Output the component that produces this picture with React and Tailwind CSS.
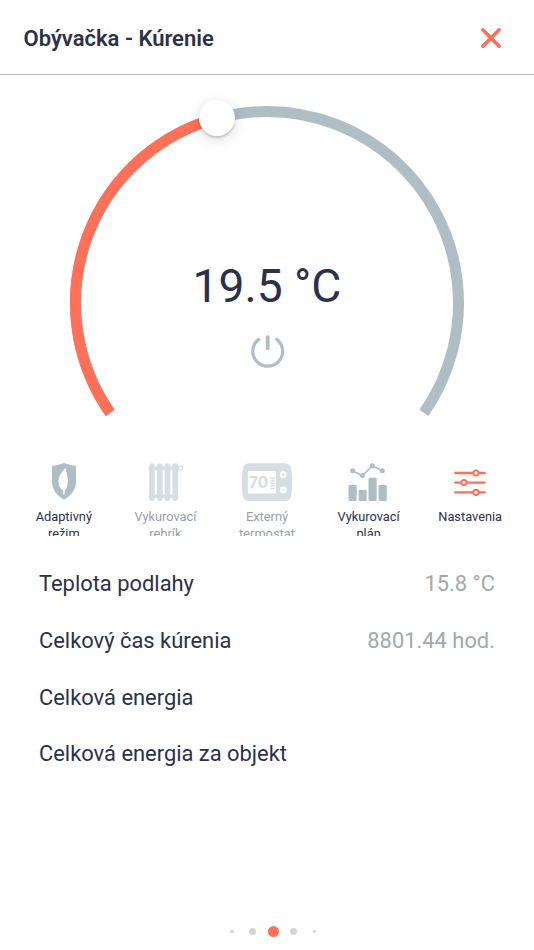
import React from 'react';
import clsx from 'clsx';

const ShieldIcon = () => (
  <svg viewBox="0 0 26 40" className="w-[26px] h-10" fill="none">
    <path d="M1 3.900C5 3.400 9 2.600 13 1C17 2.600 21 3.400 25 3.900V19.500C25 28 19.500 34 13 37.800C6.500 34 1 28 1 19.500Z" fill="#afbdc5" />
    <path d="M14.700 6C9.500 10.500 7.300 15.500 7.500 20.500C7.700 24 9.500 26.500 12 28.700L12.300 32.500H13.500L13.700 28.700C16.300 26 17.300 21.500 16.800 17.500C16.400 13.500 15.300 10 14.700 6Z" fill="#fff" />
  </svg>
);

const RadiatorIcon = () => (
  <svg viewBox="0 0 36 40" className="relative left-px w-9 h-10" fill="#d6dee1">
    {[1.2, 9, 16.7, 24.4].map((x) => (
      <path
        key={x}
        d={`M${x} 4.200Q${x} 1.200 ${x + 2.8} 1.200T${x + 5.6} 4.200L${x + 5.6} 6V33.500L${x + 5.6} 36Q${x + 5.6} 39 ${x + 2.8} 39T${x} 36L${x} 33.500V6Z`}
      />
    ))}
    <rect x="0.700" y="4.500" width="30" height="3.500" />
    <rect x="0.700" y="32.500" width="29.800" height="3.500" />
    <circle cx="32.500" cy="6" r="2.100" fill="#fff" stroke="#d6dee1" strokeWidth="1.200" />
  </svg>
);

const ThermostatIcon = () => (
  <svg viewBox="0 0 52 40" className="relative left-[0.500px] w-[52px] h-10" fill="none">
    <path
      d="M8.500 1.300H43.500Q49.500 1.300 50.300 7.500Q52 20 50.300 33Q49.500 39 43.500 39H8.500Q2.500 39 1.700 33Q0 20 1.700 7.500Q2.500 1.300 8.500 1.300Z"
      fill="#d6dee1"
    />
    <rect x="6.900" y="9" width="28" height="22.500" rx="1" fill="#fff" />
    <text x="8" y="26.200" textLength="19" lengthAdjust="spacingAndGlyphs" fontSize="16.500" fontWeight="700" fill="#d6dee1" className="font-['Inter',sans-serif]">70</text>
    <path d="M29.300 16.500H33.500M29.300 19H33.500M29.300 21.500H33.500M29.300 24H33.500M29.300 26.500H33.500" stroke="#d6dee1" strokeWidth="1.400" />
    <circle cx="42.300" cy="12.700" r="3.400" fill="#fff" />
    <circle cx="42.300" cy="28" r="3.400" fill="#fff" />
    <path d="M40.300 12.700H44.300M42.300 10.700V14.700M40.300 28H44.300" stroke="#d6dee1" strokeWidth="1.100" />
  </svg>
);

const ChartIcon = () => (
  <svg viewBox="0 0 40 40" className="relative -left-[0.500px] w-10 h-10" fill="#afbdc5">
    <rect x="0.500" y="23" width="8.200" height="16" rx="1.300" />
    <rect x="10.700" y="28" width="8" height="11" rx="1.300" />
    <rect x="20.500" y="15.700" width="8.200" height="23.300" rx="1.300" />
    <rect x="30.600" y="23" width="8.200" height="16" rx="1.300" />
    <path d="M4.700 8.700L14.400 13.700L24.300 3.700L34.300 8.700" fill="none" stroke="#afbdc5" strokeWidth="1.600" />
    <circle cx="4.700" cy="8.700" r="2.500" />
    <circle cx="14.400" cy="13.500" r="2.500" />
    <circle cx="24.300" cy="3.700" r="2.500" />
    <circle cx="34.300" cy="8.700" r="2.500" />
  </svg>
);

const SlidersIcon = () => (
  <svg viewBox="0 0 34 40" className="w-[34px] h-10" fill="#fff" stroke="#ff7058" strokeWidth="2.300" strokeLinecap="round">
    <path d="M2.200 11H31.800M2.200 20.600H31.800M2.200 30.400H31.800" />
    <circle cx="23" cy="11" r="2.600" strokeWidth="1.900" />
    <circle cx="11" cy="20.600" r="2.600" strokeWidth="1.900" />
    <circle cx="23" cy="30.400" r="2.600" strokeWidth="1.900" />
  </svg>
);

const actions = [
  { icon: ShieldIcon, lines: ['Adaptivný', 'režim'] },
  { icon: RadiatorIcon, lines: ['Vykurovací', 'rebrík'], disabled: true },
  { icon: ThermostatIcon, lines: ['Externý', 'termostat'], disabled: true },
  { icon: ChartIcon, lines: ['Vykurovací', 'plán'] },
  { icon: SlidersIcon, lines: ['Nastavenia'] },
];

const stats = [
  { label: 'Teplota podlahy', value: '15.8 °C' },
  { label: 'Celkový čas kúrenia', value: '8801.44 hod.' },
  { label: 'Celková energia', value: '' },
  { label: 'Celková energia za objekt', value: '' },
];

const Gauge = () => (
  <div className="relative h-[375px]">
    <svg viewBox="0 0 534 375" className="block w-[534px] h-[375px]" fill="none">
      <path d="M110.100 337.800A191.500 191.500 0 1 1 423.900 337.800" stroke="#afbdc5" strokeWidth="11" />
      <path d="M110.100 337.800A191.500 191.500 0 0 1 216.700 43.200" stroke="#ff7058" strokeWidth="11" />
    </svg>
    {/* Drag handle */}
    <div className="absolute left-[198.700px] top-[24.500px] size-9 rounded-full bg-white shadow-[0_2px_2px_rgba(0,0,0,0.16),0_3px_14px_rgba(0,0,0,0.15)]" />
    <div className="absolute inset-x-0 top-[183px] flex flex-col items-center">
      <span className="text-[46.200px] leading-[56px] whitespace-nowrap">19.5 °C</span>
      <svg viewBox="0 0 36 36" className="mt-[19px] w-9 h-9" fill="none" stroke="#afbdc5" strokeLinecap="round">
        <path d="M9.700 6.400A14.900 14.900 0 1 0 27.700 6.400" strokeWidth="3.200" />
        <path d="M18.700 4.200V15.200" strokeWidth="3.800" />
      </svg>
    </div>
  </div>
);

export default function App() {
  return (
    <div className="flex flex-col w-[534px] h-[950px] overflow-hidden bg-white text-[#2d3148] font-['Roboto',sans-serif]">
      <header className="flex items-center justify-between h-[75px] pt-px pl-[23.500px] pr-8 border-b border-[#afbdc5]">
        <h1 className="pt-0.5 text-[22px] leading-7 font-semibold">Obývačka - Kúrenie</h1>
        <svg viewBox="0 0 22 22" className="size-[22px]" stroke="#ff7058" strokeWidth="3.600" strokeLinecap="round">
          <path d="M2.800 2.800L19.200 19.200M19.200 2.800L2.800 19.200" />
        </svg>
      </header>

      <Gauge />

      {/* Actions */}
      <nav className="grid grid-cols-5 h-[86px] mx-[13px] pt-3 overflow-hidden">
        {actions.map(({ icon: Icon, lines, disabled }) => (
          <div key={lines.join(' ')} className="flex flex-col items-center">
            <Icon />
            <div className={clsx('mt-1.5 text-center text-[12.800px] leading-[17px] whitespace-nowrap', disabled && 'text-[#9b9daa]')}>
              {lines.map((line) => (
                <div key={line}>{line}</div>
              ))}
            </div>
          </div>
        ))}
      </nav>

      {/* Stats */}
      <dl className="mt-5 px-[39px]">
        {stats.map((row) => (
          <div key={row.label} className="flex items-center justify-between h-[56.800px] text-[21.900px]">
            <dt>{row.label}</dt>
            <dd className="text-[#a2a9ac]">{row.value}</dd>
          </div>
        ))}
      </dl>

      {/* Pagination */}
      <div className="flex items-center justify-center mt-auto mb-[12.500px] ml-[12.600px] h-3">
        <span className="size-[3.500px] rounded-full bg-[#d3d3d9]" />
        <span className="ml-[15.200px] size-[7px] rounded-full bg-[#d3d3d9]" />
        <span className="ml-[11.700px] size-[11px] rounded-full bg-[#ff7058]" />
        <span className="ml-[11.700px] size-[7px] rounded-full bg-[#d3d3d9]" />
        <span className="ml-[15.200px] size-[3.500px] rounded-full bg-[#d3d3d9]" />
      </div>
    </div>
  );
}
